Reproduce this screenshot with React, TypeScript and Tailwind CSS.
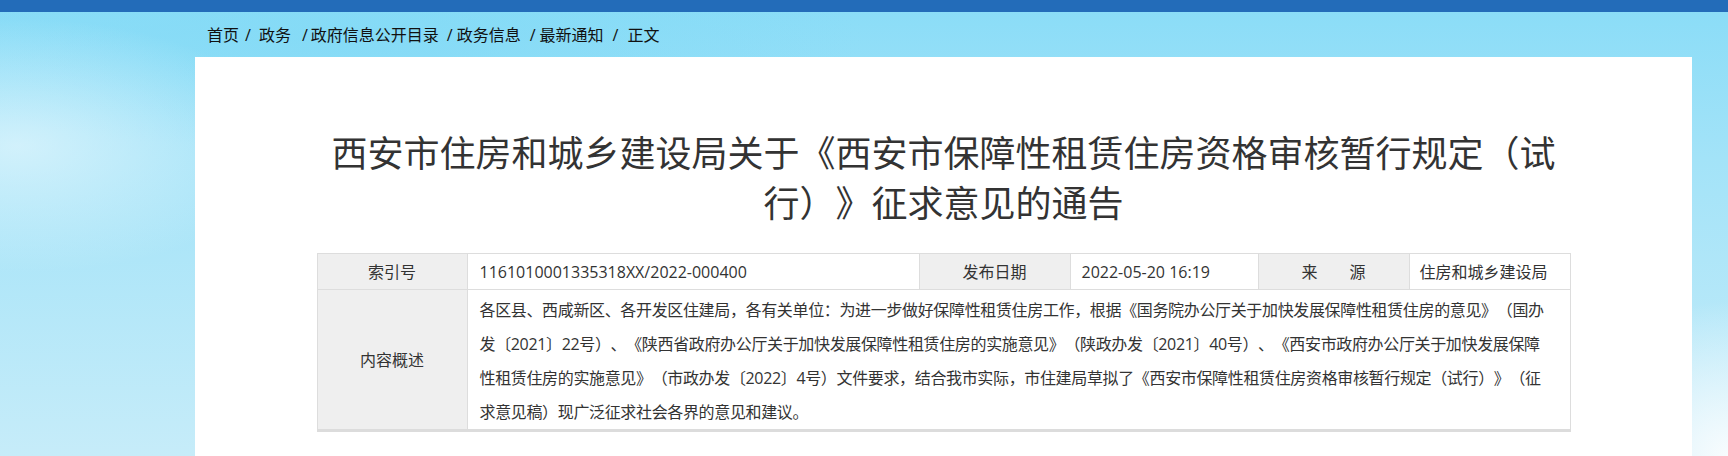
import React from 'react';

const font = "font-['Open_Sans','Noto_Sans_CJK_SC',sans-serif] [text-spacing-trim:space-all]";

const crumbs: { label: string; ml: string }[] = [
  { label: '首页', ml: 'ml-0' },
  { label: '/', ml: 'ml-[6px]' },
  { label: '政务', ml: 'ml-[8px]' },
  { label: '/', ml: 'ml-[11px]' },
  { label: '政府信息公开目录', ml: 'ml-[3px]' },
  { label: '/', ml: 'ml-[8px]' },
  { label: '政务信息', ml: 'ml-[4px]' },
  { label: '/', ml: 'ml-[9px]' },
  { label: '最新通知', ml: 'ml-[4px]' },
  { label: '/', ml: 'ml-[9px]' },
  { label: '正文', ml: 'ml-[9px]' },
];

const Breadcrumb: React.FC = () => (
  <div className="h-[45px] pl-[12px] flex items-center text-[16px] leading-[24px] text-[#111]">
    {crumbs.map((c, i) => (
      <span key={i} className={c.ml}>
        {c.label}
      </span>
    ))}
  </div>
);

const summary = [
  '各区县、西咸新区、各开发区住建局，各有关单位：为进一步做好保障性租赁住房工作，根据《国务院办公厅关于加快发展保障性租赁住房的意见》（国办',
  '发〔2021〕22号）、《陕西省政府办公厅关于加快发展保障性租赁住房的实施意见》（陕政办发〔2021〕40号）、《西安市政府办公厅关于加快发展保障',
  '性租赁住房的实施意见》（市政办发〔2022〕4号）文件要求，结合我市实际，市住建局草拟了《西安市保障性租赁住房资格审核暂行规定（试行）》（征',
  '求意见稿）现广泛征求社会各界的意见和建议。',
];

const InfoTable: React.FC = () => (
  <table className="mx-auto w-[1253px] table-fixed border-collapse text-[16px] text-[#333]">
    <colgroup>
      <col className="w-[150px]" />
      <col className="w-[452px]" />
      <col className="w-[151px]" />
      <col className="w-[188px]" />
      <col className="w-[151px]" />
      <col className="w-[161px]" />
    </colgroup>
    <tbody>
      <tr className="h-[36px]">
        <td className="border border-[#dddddd] bg-[#efefef] text-center">索引号</td>
        <td className="border border-[#dddddd] pl-[12px]">1161010001335318XX/2022-000400</td>
        <td className="border border-[#dddddd] bg-[#efefef] text-center">发布日期</td>
        <td className="border border-[#dddddd] pl-[11px]">2022-05-20 16:19</td>
        <td className="border border-[#dddddd] bg-[#efefef] text-center">来　　源</td>
        <td className="border border-[#dddddd] pl-[10px]">住房和城乡建设局</td>
      </tr>
      <tr>
        <td className="border border-[#dddddd] border-b-[3px] border-b-[#dcdcdc] bg-[#efefef] text-center align-middle">
          内容概述
        </td>
        <td
          colSpan={5}
          className="border border-[#dddddd] border-b-[3px] border-b-[#dcdcdc] pl-[12px] pt-[3px] leading-[34px] tracking-[-0.35px] overflow-hidden"
        >
          {summary.map((line, i) => (
            <div key={i} className="whitespace-nowrap">
              {line}
            </div>
          ))}
        </td>
      </tr>
    </tbody>
  </table>
);

export default function App() {
  return (
    <div
      className={`${font} min-h-screen flex flex-col bg-[radial-gradient(ellipse_16%_28%_at_1%_32%,rgba(230,247,253,0.7),transparent),radial-gradient(ellipse_9%_34%_at_100%_100%,rgba(248,252,254,1),transparent),radial-gradient(ellipse_30%_25%_at_20%_8%,rgba(130,218,246,0.8),transparent),linear-gradient(180deg,#89dcf7_0%,#a3e3f8_35%,#c6ecf9_100%)]`}
    >
      <div className="h-[12px] bg-[#236cb9]" />
      <div className="ml-[195px] w-[1497px] flex-1 flex flex-col">
        <Breadcrumb />
        <div className="flex-1 bg-white pt-[72px] pb-[20px]">
          <h1 className="mx-auto w-[1253px] text-center text-[36px] leading-[50px] font-normal text-[#333]">
            西安市住房和城乡建设局关于《西安市保障性租赁住房资格审核暂行规定（试行）》征求意见的通告
          </h1>
          <div className="mt-[24px]">
            <InfoTable />
          </div>
        </div>
      </div>
    </div>
  );
}
